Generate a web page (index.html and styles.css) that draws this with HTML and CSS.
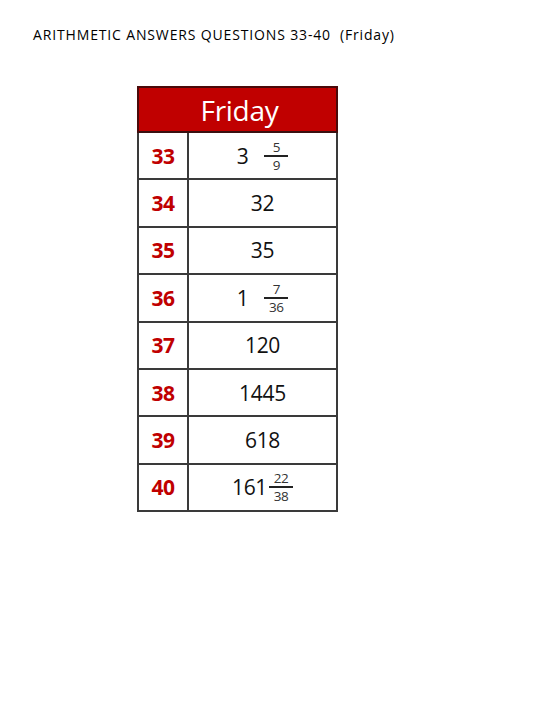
FILE: index.html
```html
<!DOCTYPE html>
<html>
<head>
<meta charset="utf-8">
<link rel="stylesheet" href="styles.css">
</head>
<body>
<div class="title">ARITHMETIC ANSWERS QUESTIONS 33-40 &nbsp;(Friday)</div>
<div class="sheet">
  <div class="head">Friday</div>
  <div class="row"><div class="num">33</div><div class="ans"><span class="whole gap">3</span><span class="frac"><span class="n">5</span><span class="d">9</span></span></div></div>
  <div class="row"><div class="num">34</div><div class="ans">32</div></div>
  <div class="row"><div class="num">35</div><div class="ans">35</div></div>
  <div class="row"><div class="num">36</div><div class="ans"><span class="whole gap">1</span><span class="frac"><span class="n">7</span><span class="d">36</span></span></div></div>
  <div class="row"><div class="num">37</div><div class="ans">120</div></div>
  <div class="row"><div class="num">38</div><div class="ans">1445</div></div>
  <div class="row"><div class="num">39</div><div class="ans">618</div></div>
  <div class="row last"><div class="num">40</div><div class="ans"><span class="whole">161</span><span class="frac"><span class="n">22</span><span class="d">38</span></span></div></div>
</div>
</body>
</html>
```
FILE: styles.css
```css
html, body { margin: 0; padding: 0; background: #fff; }
body { font-family: "Open Sans", "Liberation Sans", sans-serif; color: #000; }
.title {
  padding: 25px 0 0 33px;
  font-size: 14px;
  line-height: 19px;
  letter-spacing: 0.85px;
  white-space: nowrap;
}
.sheet {
  margin: 42px 0 0 137px;
  width: 201px;
  box-sizing: border-box;
  border-left: 2px solid #3a3a3a;
  border-right: 2px solid #3a3a3a;
  border-bottom: 2px solid #3a3a3a;
}
.head {
  height: 47px;
  margin: 0 -2px;
  box-sizing: border-box;
  background: #c00000;
  border: 2px solid #4a0a0a;
  border-bottom: 2px solid #3a1010;
  color: #fff;
  font-size: 28px;
  display: flex;
  align-items: center;
  justify-content: center;
  letter-spacing: -0.3px;
  padding-left: 4px;
}
.row {
  display: flex;
  height: 47.4px;
  box-sizing: border-box;
  border-bottom: 2px solid #3a3a3a;
}
.row.last { border-bottom: none; height: 45.4px; }
.num {
  width: 48px;
  border-right: 2px solid #3a3a3a;
  display: flex;
  align-items: center;
  justify-content: center;
  color: #c00000;
  font-weight: bold;
  font-size: 21px;
  letter-spacing: -0.5px;
}
.ans {
  flex: 1;
  display: flex;
  align-items: center;
  justify-content: center;
  font-size: 21px;
  color: #111;
  letter-spacing: -0.3px;
}
.whole.gap { margin-right: 16px; }
.whole { margin-right: 2px; }
.frac {
  display: inline-flex;
  flex-direction: column;
  align-items: center;
  font-size: 13.5px;
  line-height: 16px;
  color: #333;
}
.frac .n { padding: 0 4px; }
.frac .d { border-top: 2px solid #222; padding: 0 4px; align-self: stretch; text-align: center; min-width: 16px; }
```
